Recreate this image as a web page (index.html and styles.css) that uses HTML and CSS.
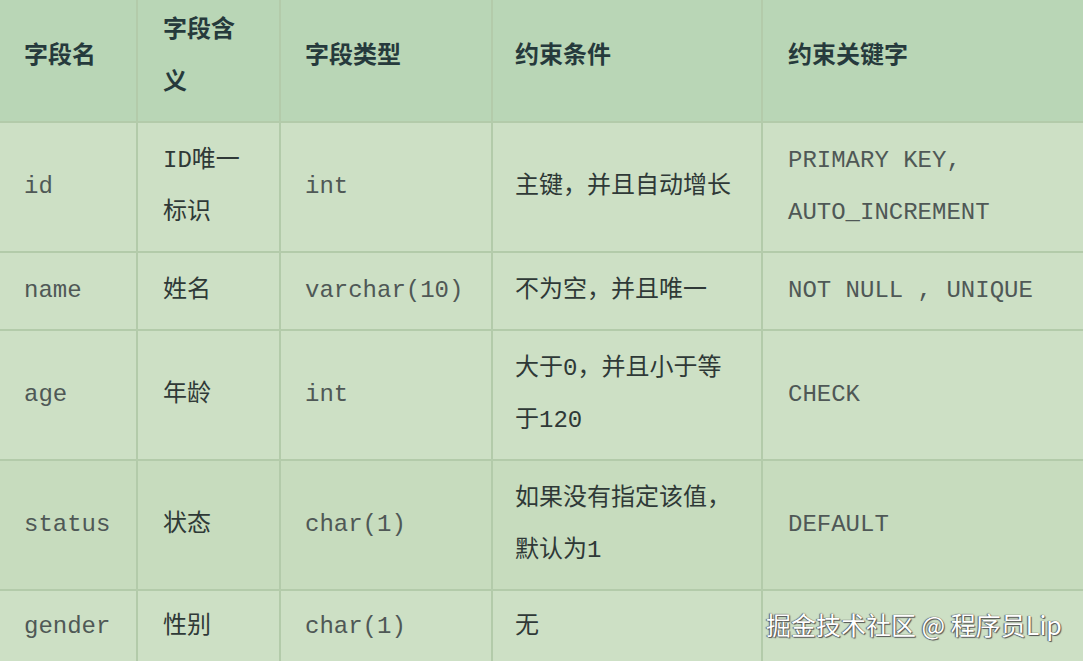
FILE: index.html
```html
<!DOCTYPE html>
<html lang="zh-CN">
<head>
<meta charset="utf-8">
<title>字段约束</title>
<link rel="stylesheet" href="styles.css">
</head>
<body>
<div class="page">
  <table class="spec">
    <colgroup>
      <col class="c1"><col class="c2"><col class="c3"><col class="c4"><col class="c5">
    </colgroup>
    <thead>
      <tr>
        <th>字段名</th>
        <th>字段含义</th>
        <th>字段类型</th>
        <th>约束条件</th>
        <th>约束关键字</th>
      </tr>
    </thead>
    <tbody>
      <tr>
        <td>id</td>
        <td>ID唯一标识</td>
        <td>int</td>
        <td>主键，并且自动增长</td>
        <td>PRIMARY KEY,<br>AUTO_INCREMENT</td>
      </tr>
      <tr>
        <td>name</td>
        <td>姓名</td>
        <td>varchar(10)</td>
        <td>不为空，并且唯一</td>
        <td>NOT NULL , UNIQUE</td>
      </tr>
      <tr>
        <td>age</td>
        <td>年龄</td>
        <td>int</td>
        <td>大于0，并且小于等于120</td>
        <td>CHECK</td>
      </tr>
      <tr class="alt">
        <td>status</td>
        <td>状态</td>
        <td>char(1)</td>
        <td>如果没有指定该值，默认为1</td>
        <td>DEFAULT</td>
      </tr>
      <tr class="last">
        <td>gender</td>
        <td>性别</td>
        <td>char(1)</td>
        <td>无</td>
        <td></td>
      </tr>
    </tbody>
  </table>
  <div class="watermark">掘金技术社区 @ 程序员Lip</div>
</div>
</body>
</html>
```

FILE: styles.css
```css
html, body {
  margin: 0;
  padding: 0;
}
body {
  width: 1083px;
  height: 661px;
  overflow: hidden;
  background: #cde0c5;
}
.page {
  position: relative;
  width: 1083px;
  height: 661px;
  overflow: hidden;
}
.spec {
  border-collapse: collapse;
  table-layout: fixed;
  width: 1104px;
  margin: -9px 0 0 -2px;
  font-family: "Liberation Mono", "Noto Sans CJK SC", monospace;
  font-size: 24px;
  line-height: 52px;
  color: #4f5856;
}
.c1 { width: 138px; }
.c2 { width: 143px; }
.c3 { width: 212px; }
.c4 { width: 270px; }
.c5 { width: 341px; }
.spec th,
.spec td {
  border: 2px solid #b3cbaa;
  padding: 12px 24px 12px 24px;
  text-align: left;
  vertical-align: middle;
  word-break: break-all;
}
.spec th {
  padding-top: 8px;
  padding-bottom: 16px;
}
.spec th:nth-child(1),
.spec td:nth-child(1) { padding-left: 24px; padding-right: 6px; }
.spec th:nth-child(2),
.spec td:nth-child(2) { padding-left: 25px; }
.spec th:nth-child(4),
.spec td:nth-child(4) { padding-left: 22px; }
.spec th:nth-child(5),
.spec td:nth-child(5) { padding-left: 25px; }
.spec th {
  background: #b9d6b6;
  font-family: "Noto Sans CJK SC", sans-serif;
  font-weight: 700;
  color: #263a3c;
}
.spec td {
  background: #cde0c5;
}
.spec tr.alt td {
  background: #c7dcbe;
}
.spec tr.last td {
  padding-top: 10px;
  padding-bottom: 40px;
  vertical-align: top;
}
.spec td:nth-child(2),
.spec td:nth-child(4) {
  color: #2f3937;
}
.watermark {
  position: absolute;
  left: 766px;
  top: 606px;
  font-family: "Noto Sans CJK SC", sans-serif;
  font-size: 25px;
  line-height: 36px;
  color: #ffffff;
  text-shadow: 0 0 1px #444, 1px 1px 1px #555, -1px 0 1px #666;
  white-space: nowrap;
}
```
